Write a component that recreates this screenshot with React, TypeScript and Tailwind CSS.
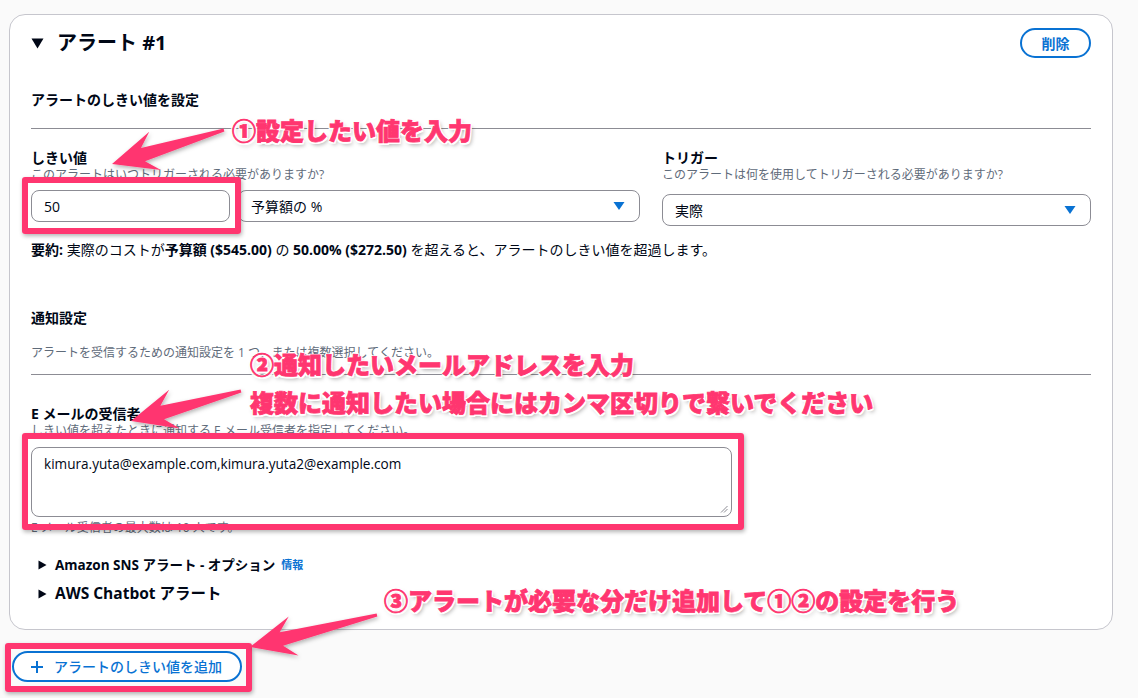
import React from "react";

// tapered annotation arrow, tail -> tip
function arrowPoints(tx: number, ty: number, px: number, py: number) {
  const dx = px - tx;
  const dy = py - ty;
  const len = Math.hypot(dx, dy);
  const ux = dx / len;
  const uy = dy / len;
  const nx = -uy;
  const ny = ux;
  const headLen = 45;
  const headW = 20;
  const wx = px - ux * headLen;
  const wy = py - uy * headLen;
  const cx = px - ux * headLen * 0.72;
  const cy = py - uy * headLen * 0.72;
  const pts = [
    [px, py],
    [wx + nx * headW, wy + ny * headW],
    [cx + nx * 7, cy + ny * 7],
    [tx + nx * 1.5, ty + ny * 1.5],
    [tx - nx * 1.5, ty - ny * 1.5],
    [cx - nx * 7, cy - ny * 7],
    [wx - nx * headW, wy - ny * headW],
  ];
  return pts.map((p) => p.join(",")).join(" ");
}

function SelectCaret() {
  return (
    <svg width="12" height="10" viewBox="0 0 12 10">
      <polygon points="0.5,1 11.5,1 6,9" fill="#0972d3" />
    </svg>
  );
}

function RightTri() {
  return (
    <svg width="9" height="10" viewBox="0 0 9 10" className="shrink-0">
      <polygon points="0.5,0.5 8.5,5 0.5,9.5" fill="#000716" />
    </svg>
  );
}

const note =
  "absolute font-['Noto_Sans_CJK_JP',sans-serif] font-black text-[24px] leading-[26px] text-[#ff3670] whitespace-nowrap [-webkit-text-stroke:0.8px_#ff3670] [text-shadow:-1.5px_-1.5px_0_#fff,1.5px_-1.5px_0_#fff,-1.5px_1.5px_0_#fff,1.5px_1.5px_0_#fff,0_2px_0_#fff,2px_3px_4px_rgba(0,0,0,0.35)]";

const pinkBox =
  "absolute border-[6px] border-[#ff3670] rounded-[3px] shadow-[1px_2px_4px_rgba(0,0,0,0.3)]";

export default function App() {
  return (
    <div className="relative w-[1138px] h-[698px] overflow-hidden bg-[#fafafa] font-['Open_Sans','Noto_Sans_CJK_JP',sans-serif] text-[#000716]">
      <div className="pt-[14px] pl-[9px]">
        {/* Alert card */}
        <div className="w-[1104px] bg-white border border-[#c6c6cd] rounded-[16px] px-[21px] pt-[13px] pb-[24px]">
          {/* Header */}
          <div className="flex items-center justify-between h-[30px]">
            <div className="flex items-center gap-[13px]">
              <svg width="13" height="11" viewBox="0 0 13 11">
                <polygon points="0.5,0.5 12.5,0.5 6.5,10.5" fill="#000716" />
              </svg>
              <span className="text-[20px] font-bold leading-[24px]">アラート #1</span>
            </div>
            <button className="w-[71px] h-[30px] rounded-full border-2 border-[#0972d3] text-[#0972d3] text-[14px] font-bold">
              削除
            </button>
          </div>

          <div className="mt-[32px] text-[14px] font-bold leading-[20px]">アラートのしきい値を設定</div>
          <div className="mt-[18px] h-px bg-[#8c8c94]" />

          {/* Threshold + trigger */}
          <div className="mt-[20px] flex gap-[22px]">
            <div className="w-[609px]">
              <div className="text-[14px] font-bold leading-[18px]">しきい値</div>
              <div className="text-[12px] leading-[16px] text-[#5f6b7a]">
                このアラートはいつトリガーされる必要がありますか?
              </div>
              <div className="mt-[7px] flex gap-[8px]">
                <div className="w-[199px] h-[32px] border border-[#8c8c94] rounded-[8px] flex items-center px-[12px] text-[14px]">
                  50
                </div>
                <div className="flex-1 h-[32px] border border-[#8c8c94] rounded-[8px] flex items-center justify-between pl-[12px] pr-[14px] text-[14px]">
                  <span>予算額の %</span>
                  <SelectCaret />
                </div>
              </div>
            </div>
            <div className="flex-1">
              <div className="text-[14px] font-bold leading-[18px]">トリガー</div>
              <div className="text-[12px] leading-[16px] text-[#5f6b7a]">
                このアラートは何を使用してトリガーされる必要がありますか?
              </div>
              <div className="mt-[11px] h-[32px] border border-[#8c8c94] rounded-[8px] flex items-center justify-between pl-[12px] pr-[14px] text-[14px]">
                <span>実際</span>
                <SelectCaret />
              </div>
            </div>
          </div>

          <div className="mt-[14px] text-[14px] leading-[20px]">
            <b>要約:</b> 実際のコストが<b>予算額 ($545.00)</b> の <b>50.00% ($272.50)</b> を超えると、アラートのしきい値を超過します。
          </div>

          {/* Notification settings */}
          <div className="mt-[48px] text-[14px] font-bold leading-[20px]">通知設定</div>
          <div className="mt-[16px] text-[12px] leading-[18px] text-[#5f6b7a]">
            アラートを受信するための通知設定を 1 つ、または複数選択してください。
          </div>
          <div className="mt-[12px] h-px bg-[#8c8c94]" />

          <div className="mt-[30px] text-[14px] font-bold leading-[18px]">E メールの受信者</div>
          <div className="text-[12px] leading-[16px] text-[#5f6b7a]">
            しきい値を超えたときに通知する E メール受信者を指定してください。
          </div>
          <div className="relative mt-[8px] w-[701px] h-[70px] border border-[#8c8c94] rounded-[8px] px-[12px] py-[6px] text-[13.6px] leading-[20px]">
            kimura.yuta@example.com,kimura.yuta2@example.com
            <svg width="8" height="8" viewBox="0 0 8 8" className="absolute right-[3px] bottom-[3px]">
              <line x1="1" y1="7.5" x2="7.5" y2="1" stroke="#8c8c94" strokeWidth="1" />
              <line x1="4" y1="7.5" x2="7.5" y2="4" stroke="#8c8c94" strokeWidth="1" />
            </svg>
          </div>
          <div className="mt-[3px] text-[12px] leading-[16px] text-[#5f6b7a]">
            E メール受信者の最大数は 10 人です。
          </div>

          <div className="mt-[19px] flex items-center gap-[8px] pl-[7px] h-[20px]">
            <RightTri />
            <span className="text-[13.5px] font-bold">Amazon SNS アラート - オプション</span>
            <span className="text-[11px] font-bold text-[#0972d3] -ml-[2px]">情報</span>
          </div>
          <div className="mt-[8px] flex items-center gap-[8px] pl-[7px] h-[22px]">
            <RightTri />
            <span className="text-[15.5px] font-bold">AWS Chatbot アラート</span>
          </div>
        </div>
      </div>

      {/* Add threshold button */}
      <div className="mt-[21px] pl-[12px]">
        <button className="w-[230px] h-[31px] rounded-full border-2 border-[#0972d3] bg-white text-[#0972d3] flex items-center gap-[10px] pl-[16px] text-[14px] font-medium">
          <svg width="14" height="14" viewBox="0 0 14 14">
            <path d="M7 1v12M1 7h12" stroke="#0972d3" strokeWidth="2" />
          </svg>
          アラートのしきい値を追加
        </button>
      </div>

      {/* Annotation overlay */}
      <div className={pinkBox + " left-[22px] top-[177px] w-[219px] h-[57px]"} />
      <div className={pinkBox + " left-[22px] top-[433px] w-[722px] h-[97px]"} />
      <div className={pinkBox + " left-[5px] top-[643px] w-[247px] h-[49px]"} />

      <svg className="absolute inset-0 pointer-events-none" width="1138" height="698">
        <defs>
          <filter id="sh" x="-20%" y="-20%" width="140%" height="140%">
            <feDropShadow dx="1" dy="2" stdDeviation="2" floodColor="#000" floodOpacity="0.3" />
          </filter>
        </defs>
        <g fill="#ff3670" filter="url(#sh)">
          <polygon points={arrowPoints(224, 130, 112, 164)} />
          <polygon points={arrowPoints(241, 391, 131, 421)} />
          <polygon points={arrowPoints(377, 615, 250, 647)} />
        </g>
      </svg>

      <div className={note + " left-[232px] top-[117px]"}>①設定したい値を入力</div>
      <div className={note + " left-[250px] top-[351px]"}>②通知したいメールアドレスを入力</div>
      <div className={note + " left-[250px] top-[389px]"}>複数に通知したい場合にはカンマ区切りで繋いでください</div>
      <div className={note + " left-[384px] top-[587px]"}>③アラートが必要な分だけ追加して①②の設定を行う</div>
    </div>
  );
}
